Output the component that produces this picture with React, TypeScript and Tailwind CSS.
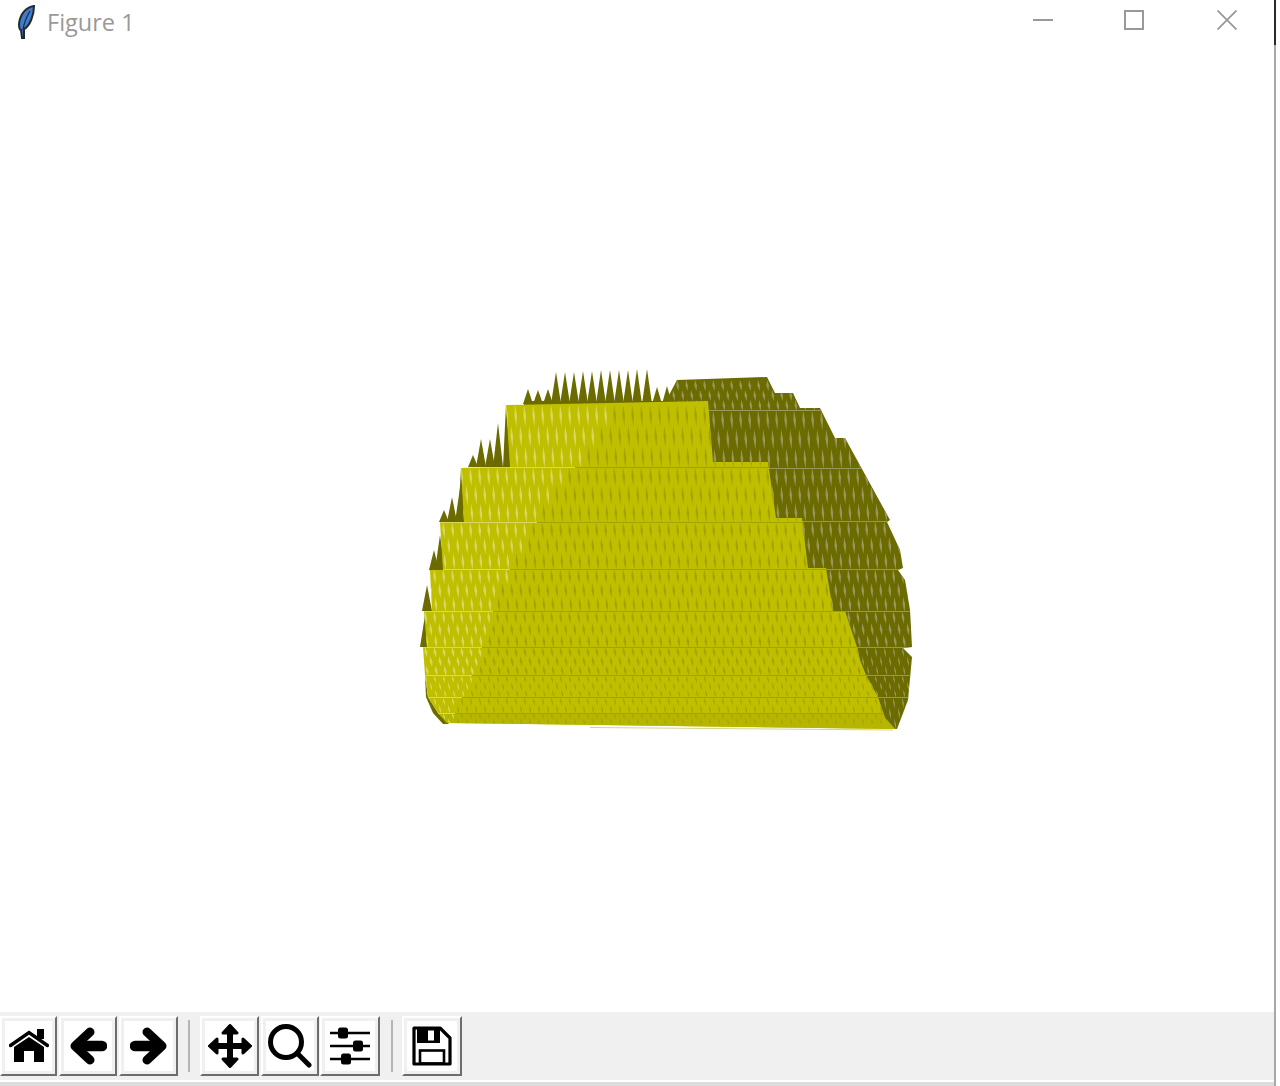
const DARK = '#6b6b00'
const YELLOW = '#bfbf00'

// silhouette of the surface, traced from the plot
const backShape = '662,403 668,397 677,380 767,377 775,393 793,393 800,408 820,408 835,438 845,438 890,520 887,522 900,550 903,568 898,570 905,580 910,610 912,647 903,648 912,657 908,700 897,729 880,729 660,600'
const frontShape =
  '506,405 708,401 713,462 768,462 776,518 802,518 808,568 826,568 833,611 845,611 857,647 860,660 866,675 878,697 885,718 895,729 447,723 438,713 428,697 425,675 423,647 427,647 424,611 432,611 430,570 443,570 440,522 464,522 461,468 510,467'
const sliverShape = '423,647 425,675 426,697 433,713 443,724 449,724 438,713 428,697 425,675'

const spikes: number[][] = [
  [528, 389, 404], [538, 390, 404], [548, 389, 404], [556, 372, 404], [565, 372, 404], [574, 372, 404], [583, 371, 404],
  [592, 371, 404], [601, 370, 404], [610, 370, 404], [619, 370, 404], [628, 370, 404], [637, 369, 404], [647, 369, 404],
  [657, 387, 404], [667, 386, 404],
  [473, 455, 467], [481, 439, 467], [490, 439, 467], [498, 423, 467],
  [444, 510, 522], [452, 497, 522], [460, 488, 522],
  [434, 550, 570], [440, 535, 570],
  [427, 585, 611], [425, 615, 647],
]

const bands = [405, 467, 522, 569, 611, 647, 675, 697, 713, 724]
const backBands = [380, 410, 468, 521, 569, 611, 647, 675, 697, 729]

// x where the surface turns from the lit side to the shaded side
const edge: number[][] = [[405, 618], [467, 575], [522, 537], [569, 510], [611, 493], [647, 482], [675, 472], [697, 462], [713, 455], [724, 450]]
function edgeAt(y: number) {
  for (let i = 1; i < edge.length; i++) {
    if (y <= edge[i][0]) {
      const t = (y - edge[i - 1][0]) / (edge[i][0] - edge[i - 1][0])
      return edge[i - 1][1] + t * (edge[i][1] - edge[i - 1][1])
    }
  }
  return 450
}

function makeStreaks(list: number[], xFrom: number, xTo: number) {
  const out: { points: string; x: number; y: number }[] = []
  list.slice(0, -1).forEach((top, b) => {
    const h = list[b + 1] - top
    const rows = h < 20 ? 2 : 3
    const half = b > 5 ? 0.8 : 1.3
    for (let r = 0; r < rows; r++) {
      const y0 = top + (h * r) / rows
      const y1 = top + (h * (r + 1)) / rows + 1
      const start = xFrom + (r % 2 ? 4.5 : 0) + r * 0.6
      for (let x = start; x < xTo; x += 9) {
        const lean = b > 4 ? 2 : 1.4
        const mid = (y0 + y1) / 2
        out.push({
          points: `${x},${y0} ${x + half + lean / 2},${mid} ${x + lean},${y1} ${x - half + lean / 2},${mid}`,
          x,
          y: mid,
        })
      }
    }
  })
  return out
}

function Surface() {
  const front = makeStreaks(bands, 425, 900)
  const back = makeStreaks(backBands, 668, 915)

  return (
    <svg className="block w-full h-full" viewBox="0 46 1274 966">
      <defs>
        <clipPath id="front-clip">
          <polygon points={frontShape} />
        </clipPath>
        <clipPath id="back-clip">
          <polygon points={backShape} />
        </clipPath>
      </defs>

      <polygon points={backShape} fill={DARK} />
      <g clipPath="url(#back-clip)">
        {back.map((s, i) => (
          <polygon key={i} points={s.points} fill="#97975c" />
        ))}
        {backBands.slice(1, -1).map((y) => (
          <rect key={y} x={660} y={y} width={260} height={1} fill="#97975c" />
        ))}
      </g>

      {spikes.map(([x, tip, base]) => (
        <polygon key={`${x}-${tip}`} points={`${x - 5},${base} ${x},${tip} ${x + 5},${base}`} fill={DARK} />
      ))}
      <rect x={524} y={401} width={150} height={5} fill={DARK} />
      <polygon points="503,467 506,405 511,467" fill={DARK} />
      <polygon points="458,522 461,468 465,522" fill={DARK} />
      <polygon points={sliverShape} fill={DARK} />

      <polygon points={frontShape} fill={YELLOW} />
      <g clipPath="url(#front-clip)">
        <rect x={420} y={713} width={490} height={18} fill="#b6b600" />
        {front.map((s, i) => (
          <polygon key={i} points={s.points} fill={s.x < edgeAt(s.y) ? '#d8d860' : '#a4a400'} />
        ))}
        {bands.slice(1, -1).map((y) => (
          <g key={y}>
            <rect x={420} y={y} width={edgeAt(y) - 420} height={1} fill="#d8d860" />
            <rect x={edgeAt(y)} y={y} width={500} height={1} fill="#a4a400" />
          </g>
        ))}
      </g>
      <line x1={590} y1={727.5} x2={893} y2={730} stroke="#d4d490" strokeWidth={1} />
    </svg>
  )
}

function HomeIcon() {
  return (
    <svg width="40" height="34" viewBox="0 0 40 34" className="blur-[0.5px]">
      <rect x="28" y="0" width="7" height="10" />
      <polyline points="1.5,16.5 20,3.5 38.5,16.5" fill="none" stroke="#000" strokeWidth="3.4" strokeLinecap="round" />
      <polygon points="5,18 20,8 35,18 35,33 25,33 25,22 15,22 15,33 5,33" />
    </svg>
  )
}

function ArrowIcon({ flip }: { flip?: boolean }) {
  return (
    <svg width="38" height="40" viewBox="0 0 38 40" className={flip ? 'blur-[0.5px] -scale-x-100' : 'blur-[0.5px]'}>
      <polyline points="21,6 6,20 21,34" fill="none" stroke="#000" strokeWidth="9" strokeLinecap="round" strokeLinejoin="round" />
      <line x1="8" y1="20" x2="33" y2="20" stroke="#000" strokeWidth="10.5" strokeLinecap="round" />
    </svg>
  )
}

function MoveIcon() {
  return (
    <svg width="46" height="46" viewBox="0 0 46 46" className="blur-[0.5px]">
      <line x1="23" y1="6" x2="23" y2="40" stroke="#000" strokeWidth="6" />
      <line x1="6" y1="23" x2="40" y2="23" stroke="#000" strokeWidth="6" />
      <g stroke="#000" strokeWidth="3" strokeLinejoin="round">
        <polygon points="23,2.5 30,10 16,10" />
        <polygon points="23,43.5 30,36 16,36" />
        <polygon points="2.5,23 10,16 10,30" />
        <polygon points="43.5,23 36,16 36,30" />
      </g>
    </svg>
  )
}

function SearchIcon() {
  return (
    <svg width="44" height="44" viewBox="0 0 44 44" className="blur-[0.5px]">
      <circle cx="18" cy="18" r="15.5" fill="none" stroke="#000" strokeWidth="5" />
      <line x1="29.5" y1="29.5" x2="41" y2="41" stroke="#000" strokeWidth="5" strokeLinecap="round" />
    </svg>
  )
}

function SlidersIcon() {
  return (
    <svg width="40" height="38" viewBox="0 0 40 38" className="blur-[0.5px]">
      <g stroke="#000" strokeWidth="2.6">
        <line x1="0" y1="6" x2="40" y2="6" />
        <line x1="0" y1="19" x2="40" y2="19" />
        <line x1="0" y1="32" x2="40" y2="32" />
      </g>
      <rect x="8" y="0.5" width="10" height="11" rx="2.5" />
      <rect x="23" y="13.5" width="10" height="11" rx="2.5" />
      <rect x="11" y="26.5" width="10" height="11" rx="2.5" />
    </svg>
  )
}

function SaveIcon() {
  return (
    <svg width="40" height="40" viewBox="0 0 40 40" className="blur-[0.5px]">
      <path d="M2 2H28L38 12V38H2Z" fill="none" stroke="#000" strokeWidth="3.2" strokeLinejoin="round" />
      <rect x="5" y="2" width="23" height="15" />
      <rect x="16" y="4.5" width="6" height="10" fill="#fff" />
      <rect x="8" y="24.5" width="24" height="13" fill="none" stroke="#000" strokeWidth="2.6" />
    </svg>
  )
}

function ToolButton({ className, children }: { className: string; children: React.ReactNode }) {
  return (
    <div className={`h-[60px] border-2 border-t-white border-l-white border-r-[#6d6d6d] border-b-[#6d6d6d] ${className}`}>
      <div className="h-full border-[3px] border-[#f0f0f0] bg-white flex items-center justify-center">{children}</div>
    </div>
  )
}

function Separator({ className }: { className: string }) {
  return <div className={`w-[2px] h-[52px] mt-1 bg-[#b4b4b4] ${className}`} />
}

export default function App() {
  return (
    <div className="w-[1280px] h-[1086px] bg-white flex overflow-hidden">
      <div className="w-[1274px] h-full flex flex-col">
        <div className="h-[46px] flex items-center relative">
          <svg width="22" height="34" viewBox="0 0 22 34" className="ml-[15px] mt-[-2px] blur-[0.4px]">
            <path d="M19 1C11 2 5 9 4 19C4 23 5 25 6 25L7 33L9 33L9 24C15 21 19 10 19 1Z" fill="#3f7ccc" stroke="#26282c" strokeWidth="2" />
            <path d="M15 6C12 11 9 17 8 25" fill="none" stroke="#1d2b44" strokeWidth="1.2" />
          </svg>
          <span className="ml-[10px] text-[23.5px] leading-none text-[#999999] font-['Open_Sans',sans-serif]">Figure 1</span>
          <div className="ml-auto flex items-center h-full pb-[6px]">
            <div className="w-[20px] h-[2px] bg-[#999999]" />
            <div className="w-[20px] h-[20px] ml-[71px] border-2 border-[#999999]" />
            <svg width="20" height="20" viewBox="0 0 20 20" className="ml-[73px] mr-[37px]">
              <path d="M0.5 0.5L19.5 19.5M19.5 0.5L0.5 19.5" stroke="#999999" strokeWidth="1.8" />
            </svg>
          </div>
        </div>

        <div className="h-[966px]">
          <Surface />
        </div>

        <div className="h-[68px] bg-[#f0f0f0] flex items-start pt-1">
          <ToolButton className="w-[57px]">
            <HomeIcon />
          </ToolButton>
          <ToolButton className="w-[58px] ml-[2px]">
            <ArrowIcon />
          </ToolButton>
          <ToolButton className="w-[59px] ml-[2px]">
            <ArrowIcon flip />
          </ToolButton>
          <Separator className="ml-[10px]" />
          <ToolButton className="w-[59px] ml-[10px]">
            <MoveIcon />
          </ToolButton>
          <ToolButton className="w-[58px] ml-[2px]">
            <SearchIcon />
          </ToolButton>
          <ToolButton className="w-[60px] ml-[1px]">
            <SlidersIcon />
          </ToolButton>
          <Separator className="ml-[11px]" />
          <ToolButton className="w-[60px] ml-[9px]">
            <SaveIcon />
          </ToolButton>
        </div>
        <div className="h-[2px] bg-white" />
        <div className="h-[4px] bg-[#dcdcdc]" />
      </div>
      <div className="w-[2px] h-full flex flex-col bg-[#a8a8a8]">
        <div className="h-[45px] bg-[#2a2a2a]" />
      </div>
    </div>
  )
}
